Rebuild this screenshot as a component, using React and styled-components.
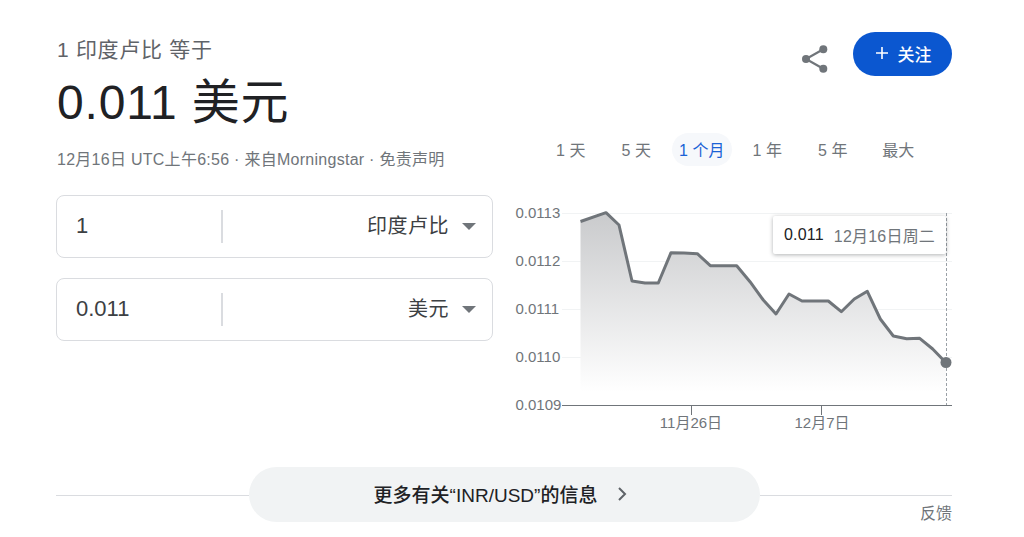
import React from 'react'
import styled, { createGlobalStyle } from 'styled-components'

const GlobalStyle = createGlobalStyle`
    html, body {
        margin: 0;
        background: #fff;
        font-family: "Liberation Sans", "Noto Sans CJK SC", sans-serif;
    }
`

const Page = styled.div`
    width: 1024px;
    height: 537px;
    box-sizing: border-box;
    padding: 32px 71px 0 56px;
    overflow: hidden;
`

const Columns = styled.div`
    display: grid;
    grid-template-columns: 437px 437px;
    column-gap: 22px;
    height: 408px;
`

const Left = styled.div`
    display: flex;
    flex-direction: column;
`

const Right = styled.div`
    display: flex;
    flex-direction: column;
`

const Caption = styled.div`
    font-size: 21px;
    line-height: 36px;
    color: #5f6368;
    letter-spacing: 0.7px;
    margin-left: 1px;
`

const Amount = styled.div`
    font-size: 48px;
    line-height: 60px;
    color: #202124;
    letter-spacing: 0.8px;
    margin: 5px 0 0 1px;
`

const Meta = styled.div`
    font-size: 16px;
    line-height: 24px;
    color: #70757a;
    letter-spacing: 0.27px;
    margin: 15px 0 0 1px;
    white-space: nowrap;
`

const Converter = styled.div`
    display: flex;
    align-items: center;
    height: 63px;
    box-sizing: border-box;
    padding-bottom: 1px;
    border: 1px solid #dadce0;
    border-radius: 8px;
    margin-top: ${p => p.$gap}px;
`

const ValueCell = styled.div`
    width: 164px;
    box-sizing: border-box;
    padding-left: 19px;
    font-size: 22px;
    color: #3c4043;
`

const Divider = styled.div`
    width: 2px;
    height: 33px;
    background: #dadce0;
`

const CurrencyCell = styled.div`
    flex: 1;
    display: flex;
    justify-content: flex-end;
    align-items: center;
    gap: 13px;
    padding-right: 16px;
    font-size: 20px;
    letter-spacing: 0.5px;
    color: #3c4043;
`

const CurrencyName = styled.span`
    margin-bottom: 3px;
`

const Caret = styled.span`
    width: 0;
    height: 0;
    border-left: 7px solid transparent;
    border-right: 7px solid transparent;
    border-top: 7px solid #70757a;
`

const Actions = styled.div`
    display: flex;
    justify-content: flex-end;
    align-items: flex-start;
    gap: 23px;
    height: 44px;
`

const ShareIcon = styled.svg`
    margin-top: 12px;
`

const FollowButton = styled.button`
    width: 99px;
    height: 44px;
    border: 0;
    border-radius: 22px;
    background: #0b57d0;
    color: #fff;
    font: 500 17px "Liberation Sans", "Noto Sans CJK SC", sans-serif;
    display: flex;
    align-items: center;
    justify-content: center;
    gap: 8px;
    padding: 0 0 2px;
`

const Tabs = styled.div`
    display: grid;
    grid-template-columns: repeat(6, 65.5px);
    margin: 57px 0 0 23px;
`

const Tab = styled.div`
    justify-self: center;
    width: 60px;
    height: 33px;
    box-sizing: border-box;
    padding-bottom: 2px;
    border-radius: 17px;
    display: flex;
    align-items: center;
    justify-content: center;
    font-size: 16px;
    white-space: nowrap;
    color: ${p => (p.$active ? '#1a62d6' : '#70757a')};
    background: ${p => (p.$active ? '#f6f8fb' : 'transparent')};
`

const Chart = styled.div`
    position: relative;
    height: 245px;
    margin-top: 29px;
`

const ChartSvg = styled.svg`
    display: block;
    overflow: visible;

    text {
        font: 15px "Liberation Sans", "Noto Sans CJK SC", sans-serif;
        fill: #70757a;
    }
`

const Tooltip = styled.div`
    position: absolute;
    left: 258px;
    top: 21px;
    width: 173px;
    height: 38px;
    box-sizing: border-box;
    padding: 0 0 1px 11px;
    display: flex;
    align-items: center;
    gap: 10px;
    background: #fff;
    border-radius: 2px;
    box-shadow: 0 1px 4px rgba(60, 64, 67, 0.4);
    font-size: 16px;
    letter-spacing: 0.2px;
    color: #70757a;
    white-space: nowrap;

    b {
        font-weight: 400;
        color: #202124;
    }
`

const Footer = styled.div`
    display: grid;
    grid-template-columns: 193px 511px 192px;
    height: 55px;
    margin-top: 27px;
`

const Line = styled.div`
    grid-row: 1;
    grid-column: ${p => p.$col};
    align-self: center;
    height: 1px;
    margin-top: 2px;
    background: #dadce0;
`

const MoreButton = styled.div`
    grid-row: 1;
    grid-column: 2;
    box-sizing: border-box;
    padding: 0 6px 2px 0;
    border-radius: 28px;
    background: #f1f3f4;
    display: flex;
    align-items: center;
    justify-content: center;
    gap: 20px;
    font-size: 19px;
    font-weight: 500;
    color: #202124;
`

const Feedback = styled.div`
    grid-row: 1;
    grid-column: 3;
    align-self: end;
    justify-self: end;
    font-size: 16px;
    line-height: 18px;
    margin-bottom: -1px;
    color: #70757a;
`

const PTS = [
    [580.5, 221.5], [606, 212.7], [619, 225], [632, 281], [645, 283], [658.3, 283],
    [671, 252.7], [684, 253], [697.3, 253.7], [710.3, 265.7], [736.7, 265.7], [750, 281.7],
    [763.3, 300], [776, 314], [789, 294], [802, 301], [828.3, 301], [841.3, 311.7],
    [854.3, 299], [867.3, 291.3], [880.3, 319], [893.3, 336], [906.7, 338.7], [919.7, 338.3],
    [932.7, 349], [946, 362.7],
]
const LINE = PTS.map(p => p.join(',')).join(' ')
const AREA = `580.5,392 ${LINE} 946,392`
const GRID = [
    { y: 213.5, label: '0.0113' },
    { y: 261.5, label: '0.0112' },
    { y: 309.5, label: '0.0111' },
    { y: 357.5, label: '0.0110' },
]

const PriceChart = () => (
    <Chart>
        <ChartSvg width="437" height="245" viewBox="515 195 437 245">
            <defs>
                <linearGradient id="area" x1="0" y1="212" x2="0" y2="392" gradientUnits="userSpaceOnUse">
                    <stop offset="0" stopColor="#c9cacc" />
                    <stop offset="1" stopColor="#ffffff" />
                </linearGradient>
            </defs>
            {GRID.map(g => (
                <g key={g.label}>
                    <line x1="562" x2="952" y1={g.y} y2={g.y} stroke="#f1f3f4" />
                    <text x="515.5" y={g.y + 4.5}>{g.label}</text>
                </g>
            ))}
            <polygon points={AREA} fill="url(#area)" />
            <line x1="946.5" x2="946.5" y1="213" y2="405" stroke="#9aa0a6" strokeDasharray="3 2" />
            <polyline points={LINE} fill="none" stroke="#70757a" strokeWidth="3" strokeLinejoin="round" />
            <circle cx="946" cy="362.5" r="5.5" fill="#70757a" />
            <line x1="562" x2="952" y1="405.5" y2="405.5" stroke="#70757a" />
            <text x="515.5" y="410">0.0109</text>
            <line x1="691.5" x2="691.5" y1="405" y2="415" stroke="#70757a" />
            <line x1="821.5" x2="821.5" y1="405" y2="415" stroke="#70757a" />
            <text x="691" y="428" textAnchor="middle">11月26日</text>
            <text x="822" y="428" textAnchor="middle">12月7日</text>
        </ChartSvg>
        <Tooltip><b>0.011</b><span>12月16日周二</span></Tooltip>
    </Chart>
)

const App = () => {
    return (
        <Page>
            <GlobalStyle />
            <Columns>
                <Left>
                    <Caption>1 印度卢比 等于</Caption>
                    <Amount>0.011 美元</Amount>
                    <Meta>12月16日 UTC上午6:56 · 来自Morningstar · 免责声明</Meta>
                    <Converter $gap={23}>
                        <ValueCell>1</ValueCell>
                        <Divider />
                        <CurrencyCell><CurrencyName>印度卢比</CurrencyName><Caret /></CurrencyCell>
                    </Converter>
                    <Converter $gap={20}>
                        <ValueCell>0.011</ValueCell>
                        <Divider />
                        <CurrencyCell><CurrencyName>美元</CurrencyName><Caret /></CurrencyCell>
                    </Converter>
                </Left>
                <Right>
                    <Actions>
                        <ShareIcon width="30" height="30" viewBox="0 0 30 30" fill="#70757a">
                            <circle cx="23.3" cy="5.3" r="4" />
                            <circle cx="6" cy="15" r="4" />
                            <circle cx="23.3" cy="24.7" r="4" />
                            <path d="M23.3 5.3L6 15l17.3 9.7" fill="none" stroke="#70757a" strokeWidth="2.2" />
                        </ShareIcon>
                        <FollowButton>
                            <svg width="16" height="16" viewBox="0 0 16 16" stroke="#fff" strokeWidth="1.6" fill="none">
                                <path d="M8 2v12M2 8h12" />
                            </svg>
                            关注
                        </FollowButton>
                    </Actions>
                    <Tabs>
                        <Tab>1 天</Tab>
                        <Tab>5 天</Tab>
                        <Tab $active>1 个月</Tab>
                        <Tab>1 年</Tab>
                        <Tab>5 年</Tab>
                        <Tab>最大</Tab>
                    </Tabs>
                    <PriceChart />
                </Right>
            </Columns>
            <Footer>
                <Line $col={1} />
                <MoreButton>
                    更多有关“INR/USD”的信息
                    <svg width="12" height="16" viewBox="0 0 12 16" stroke="#5f6368" strokeWidth="2" fill="none">
                        <path d="M2 2l6 6-6 6" />
                    </svg>
                </MoreButton>
                <Line $col={3} />
                <Feedback>反馈</Feedback>
            </Footer>
        </Page>
    )
}

export default App
